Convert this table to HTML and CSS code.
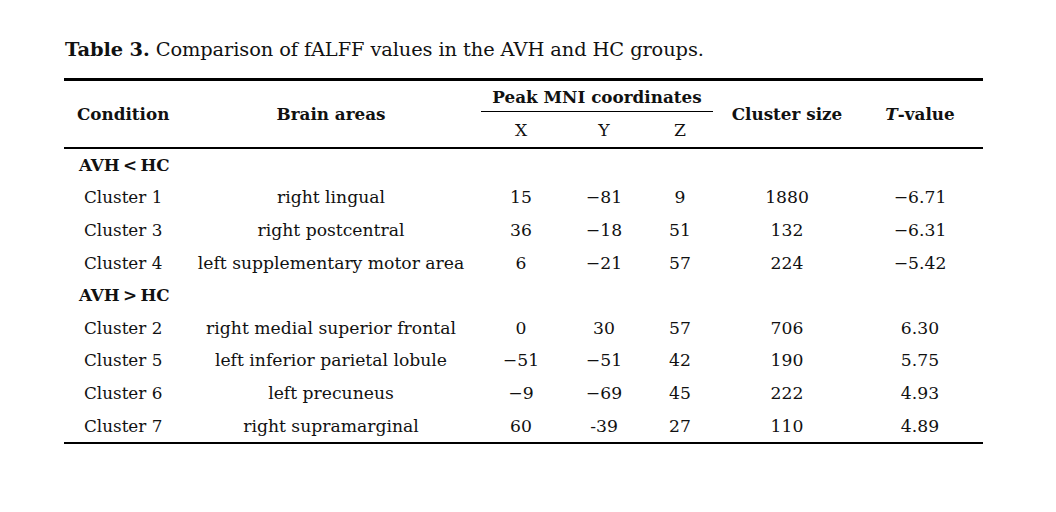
FILE: index.html
```html
<!DOCTYPE html>
<html lang="en">
<head>
<meta charset="utf-8">
<title>Table 3</title>
<link rel="stylesheet" href="styles.css">
</head>
<body>
<div class="page">
  <table class="data">
    <caption class="cap"><b>Table 3.</b> Comparison of fALFF values in the AVH and HC groups.</caption>
    <colgroup>
      <col class="c-cond"><col class="c-area"><col class="c-x"><col class="c-y"><col class="c-z"><col class="c-size"><col class="c-t">
    </colgroup>
    <thead>
      <tr class="h1">
        <th rowspan="2" class="left hcond">Condition</th>
        <th rowspan="2">Brain areas</th>
        <th colspan="3" class="peak"><span class="peak-label">Peak MNI coordinates</span></th>
        <th rowspan="2">Cluster size</th>
        <th rowspan="2"><i>T</i>-value</th>
      </tr>
      <tr class="h2">
        <th class="axis">X</th><th class="axis">Y</th><th class="axis">Z</th>
      </tr>
    </thead>
    <tbody>
      <tr class="grp"><td colspan="7">AVH&thinsp;&lt;&thinsp;HC</td></tr>
      <tr><td class="left">Cluster 1</td><td>right lingual</td><td>15</td><td>−81</td><td>9</td><td>1880</td><td>−6.71</td></tr>
      <tr><td class="left">Cluster 3</td><td>right postcentral</td><td>36</td><td>−18</td><td>51</td><td>132</td><td>−6.31</td></tr>
      <tr><td class="left">Cluster 4</td><td>left supplementary motor area</td><td>6</td><td>−21</td><td>57</td><td>224</td><td>−5.42</td></tr>
      <tr class="grp"><td colspan="7">AVH&thinsp;&gt;&thinsp;HC</td></tr>
      <tr><td class="left">Cluster 2</td><td>right medial superior frontal</td><td>0</td><td>30</td><td>57</td><td>706</td><td>6.30</td></tr>
      <tr><td class="left">Cluster 5</td><td>left inferior parietal lobule</td><td>−51</td><td>−51</td><td>42</td><td>190</td><td>5.75</td></tr>
      <tr><td class="left">Cluster 6</td><td>left precuneus</td><td>−9</td><td>−69</td><td>45</td><td>222</td><td>4.93</td></tr>
      <tr class="last"><td class="left">Cluster 7</td><td>right supramarginal</td><td>60</td><td>-39</td><td>27</td><td>110</td><td>4.89</td></tr>
    </tbody>
  </table>
</div>
</body>
</html>
```
FILE: styles.css
```css
html, body {
  margin: 0;
  padding: 0;
  background: #ffffff;
}
body {
  font-family: "DejaVu Serif", "Liberation Serif", serif;
  color: #111111;
}
.page {
  padding: 37px 0 0 64px;
}
.data {
  width: 919px;
  border-collapse: collapse;
  table-layout: fixed;
  font-size: 16.8px;
}
.cap {
  caption-side: top;
  text-align: left;
  font-size: 19.4px;
  line-height: 26px;
  padding: 0 0 15px 1px;
  letter-spacing: -0.1px;
}
.cap b {
  font-weight: bold;
}
.c-cond { width: 121px; }
.c-area { width: 292px; }
.c-x { width: 88px; }
.c-y { width: 78px; }
.c-z { width: 74px; }
.c-size { width: 140px; }
.c-t { width: 126px; }

thead {
  border-top: 3px solid #000;
  border-bottom: 2px solid #000;
}
th {
  font-weight: bold;
  text-align: center;
  padding: 0;
  vertical-align: middle;
}
.h1 { height: 32px; }
.h2 { height: 36px; }
.peak {
  padding: 0 4px;
  vertical-align: bottom;
}
.peak-label {
  display: block;
  border-bottom: 1.5px solid #000;
  padding-bottom: 4px;
}
.axis {
  font-weight: normal;
  font-size: 17.2px;
  vertical-align: middle;
  padding: 1px 0 0;
}
.hcond {
  text-align: left;
  padding-left: 13px;
}
td {
  text-align: center;
  padding: 0;
  height: 32.6px;
  vertical-align: middle;
  white-space: nowrap;
  font-size: 17.2px;
}
td.left {
  text-align: left;
  padding-left: 20px;
  font-size: 16.8px;
}
.grp td {
  text-align: left;
  font-weight: bold;
  font-size: 16.8px;
  padding-left: 15px;
}
.last td {
  border-bottom: 2px solid #000;
}
```
